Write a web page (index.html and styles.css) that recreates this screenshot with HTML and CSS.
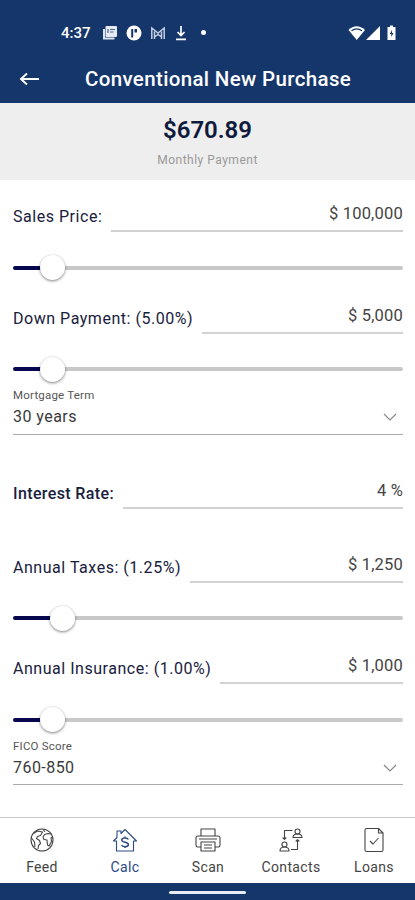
FILE: index.html
```
<!DOCTYPE html>
<html lang="en">
  <head>
    <meta charset="UTF-8">
    <meta name="viewport" content="width=device-width, initial-scale=1.0">
    <title>Conventional New Purchase</title>
    <link rel="stylesheet" href="styles.css">
  </head>
  <body>
    <header>
      <div class="status-bar">
        <span class="clock">4:37</span>
        <svg class="notes" width="16" height="16" viewBox="0 0 16 16">
          <path d="M2 4v9.500h10.500" fill="none" stroke="#dfe5f0" stroke-width="2"/>
          <rect x="3.500" y="1" width="11.500" height="11" rx="1" fill="#e6eaf3"/>
          <path d="M6 4v4M8 4.500h5M8 7h3.500" stroke="#4c6590" stroke-width="1.200"/>
        </svg>
        <svg width="16" height="16" viewBox="0 0 16 16">
          <circle cx="8" cy="8" r="7.500" fill="#fff"/>
          <path d="M6.200 12.500V4" fill="none" stroke="#15366b" stroke-width="2"/>
          <path d="M8.500 4h2.500v3.500H8.500z" fill="#15366b"/>
        </svg>
        <svg width="16" height="16" viewBox="0 0 16 16">
          <path d="M1.800 14V3l6.200 5 6.200-5v11M4.500 14V6.500M11.500 14V6.500M4.500 12L8 9.500l3.500 2.500" fill="none" stroke="#c3cde0" stroke-width="1.500"/>
        </svg>
        <svg width="14" height="16" viewBox="0 0 14 16">
          <path d="M7 1v9M3.500 7L7 10.500 10.500 7M2 14.300h10" fill="none" stroke="#fff" stroke-width="1.700"/>
        </svg>
        <span class="dot"></span>
        <svg class="signals" width="50" height="16" viewBox="0 0 50 16">
          <path d="M.5 5Q8.500-2.500 17 5L8.750 15z" fill="#fff"/>
          <path d="M3.500 5.800q5.200-3.800 10.500 0" fill="none" stroke="#15366b" stroke-width="1.300"/>
          <path d="M18 15L32 1v14z" fill="#fff"/>
          <path d="M39.500 2h2.500V.5h3V2h2.500v13h-8z" fill="#fff"/>
          <path d="M44 5l-2.200 4h1.500v3l2.200-4H44z" fill="#15366b"/>
        </svg>
      </div>
      <div class="app-bar">
        <svg class="back" width="22" height="16" viewBox="0 0 22 16">
          <path d="M20 8H2M8 2.500L2 8l6 5.500" fill="none" stroke="#fff" stroke-width="2"/>
        </svg>
        <h1>Conventional New Purchase</h1>
      </div>
    </header>

    <section class="summary">
      <div class="amount">$670.89</div>
      <div class="caption">Monthly Payment</div>
    </section>

    <main>
      <div class="field">
        <span class="label">Sales Price:</span>
        <span class="value">$ 100,000</span>
      </div>
      <div class="slider">
        <div class="filled" style="width: 10%"></div>
        <div class="knob"></div>
        <div class="rest"></div>
      </div>

      <div class="field">
        <span class="label">Down Payment: (5.00%)</span>
        <span class="value">$ 5,000</span>
      </div>
      <div class="slider">
        <div class="filled" style="width: 10%"></div>
        <div class="knob"></div>
        <div class="rest"></div>
      </div>

      <div class="select">
        <div class="select-label">Mortgage Term</div>
        <div class="select-value">
          <span>30 years</span>
          <svg width="14" height="8" viewBox="0 0 14 8"><path d="M1 1l6 6 6-6"/></svg>
        </div>
      </div>

      <div class="field spaced">
        <span class="label bold">Interest Rate:</span>
        <span class="value">4 %</span>
      </div>

      <div class="field spaced">
        <span class="label">Annual Taxes: (1.25%)</span>
        <span class="value">$ 1,250</span>
      </div>
      <div class="slider">
        <div class="filled" style="width: 12.5%"></div>
        <div class="knob"></div>
        <div class="rest"></div>
      </div>

      <div class="field">
        <span class="label">Annual Insurance: (1.00%)</span>
        <span class="value">$ 1,000</span>
      </div>
      <div class="slider">
        <div class="filled" style="width: 10%"></div>
        <div class="knob"></div>
        <div class="rest"></div>
      </div>

      <div class="select">
        <div class="select-label">FICO Score</div>
        <div class="select-value">
          <span>760-850</span>
          <svg width="14" height="8" viewBox="0 0 14 8"><path d="M1 1l6 6 6-6"/></svg>
        </div>
      </div>
    </main>

    <nav class="tabs">
      <a class="tab">
        <svg width="26" height="26" viewBox="0 0 26 26">
          <circle cx="13" cy="13" r="11"/>
          <path d="M4.500 6.500l4-2.500 5 1-2 3.500-3 1-1 2 3 2 1 3-2 2-.5 3.500M2.500 11l3 4 .5 5M14 2.500l2 2.500M22 7l-3-.5-3.500 1L14 10l1 2.500 3 .5.500 5 1.500 1 2.500-4.500-.5-3.500 1.500-1"/>
        </svg>
        <span>Feed</span>
      </a>
      <a class="tab active">
        <svg width="26" height="26" viewBox="0 0 26 26">
          <path d="M4.500 14v10h17V14h3L13 2.500 9 6.500V4H5v6.500L1.500 14z"/>
          <path d="M16.300 12.500c-.5-1.200-1.700-1.600-3.300-1.600-2 0-3.200.7-3.200 2.100 0 3.200 6.600 1.400 6.600 4.500 0 1.500-1.400 2.200-3.400 2.200-1.800 0-3-.5-3.500-1.700M13 9.500v1.500M13 19.500V21" stroke-width="1.500"/>
        </svg>
        <span>Calc</span>
      </a>
      <a class="tab">
        <svg width="26" height="26" viewBox="0 0 26 26">
          <path d="M6 9V2h14v7M6 20H2.500Q1 20 1 18v-7q0-2 2-2h20q2 0 2 2v7q0 2-1.500 2H20M6 15h14v9H6zM4 12h18M9 18h8M9 21h8"/>
        </svg>
        <span>Scan</span>
      </a>
      <a class="tab">
        <svg width="26" height="26" viewBox="0 0 26 26">
          <circle cx="19.500" cy="4.500" r="2.500"/>
          <path d="M15 10.500q0-3.500 4.500-3.500t4.500 3.500z"/>
          <circle cx="6.500" cy="17.500" r="2.500"/>
          <path d="M2 24q0-4 4.500-4t4.500 4zM14.500 3.500H6.500V12M4.700 10.500l1.800 1.800 1.800-1.800M13 22.500h6.500V13M17.700 14.500l1.800-1.800 1.800 1.800"/>
        </svg>
        <span>Contacts</span>
      </a>
      <a class="tab">
        <svg width="26" height="26" viewBox="0 0 26 26">
          <path d="M4 3q0-1.500 1.500-1.500h12l4.500 4.500v17q0 1.500-1.500 1.500h-15Q4 24.500 4 23zM17.500 1.500V6H22M9 14l3 3 5.500-6"/>
        </svg>
        <span>Loans</span>
      </a>
    </nav>

    <footer><div class="home-bar"></div></footer>
  </body>
</html>
```
FILE: styles.css
```
* {
  box-sizing: border-box;
}
body {
  margin: 0;
  height: 900px;
  display: flex;
  flex-direction: column;
  overflow: hidden;
  font-family: Roboto, Arial, sans-serif;
  background: #fff;
}
header {
  height: 103px;
  background: #15366b;
  color: #fff;
}
.status-bar {
  height: 56px;
  padding: 9px 17px 0 61px;
  display: flex;
  align-items: center;
}
.clock {
  width: 41px;
  font-size: 15px;
  font-weight: 500;
}
.status-bar svg {
  margin-right: 8px;
}
.dot {
  width: 5px;
  height: 5px;
  margin-left: 5px;
  border-radius: 50%;
  background: #fff;
}
.status-bar .signals {
  margin: 0 0 0 auto;
}
.app-bar {
  height: 45px;
  padding-left: 19px;
  display: flex;
  align-items: center;
}
h1 {
  margin: 1px 0 0 44px;
  font-size: 20.5px;
  font-weight: 500;
  letter-spacing: 0.35px;
  white-space: nowrap;
}

.summary {
  height: 77px;
  padding-top: 11px;
  text-align: center;
  background: #eee;
}
.amount {
  font-size: 24px;
  line-height: 32px;
  font-weight: 600;
  color: #101a3c;
}
.caption {
  margin-top: 6px;
  font-size: 12px;
  line-height: 16px;
  letter-spacing: 0.5px;
  color: #999;
}

main {
  flex: 1;
  padding: 10px 12px 0 13px;
}
.field {
  height: 42px;
  display: flex;
  gap: 9px;
}
.label {
  padding-top: 17px;
  font-size: 16px;
  line-height: 20px;
  letter-spacing: 0.53px;
  color: #18203d;
  white-space: nowrap;
}
.bold {
  font-weight: 500;
  letter-spacing: 0.38px;
}
.value {
  flex: 1;
  padding-top: 14px;
  border-bottom: 2px solid #d2d2d2;
  font-size: 16.5px;
  line-height: 20px;
  letter-spacing: 0.2px;
  text-align: right;
  color: #444;
}
.spaced {
  margin-top: 32px;
}
.slider {
  height: 26px;
  margin: 22.5px 0 11px;
  display: flex;
  align-items: center;
}
.filled {
  height: 4px;
  margin-right: -12px;
  border-radius: 2px 0 0 2px;
  background: #07074f;
}
.knob {
  width: 25px;
  height: 25px;
  flex: none;
  border-radius: 50%;
  background: #fff;
  box-shadow: 0 1px 3px rgba(0, 0, 0, 0.5);
  z-index: 1;
}
.rest {
  flex: 1;
  height: 4px;
  border-radius: 0 2px 2px 0;
  background: #c8c8c8;
}
.select {
  height: 46.5px;
  margin-top: -5px;
  border-bottom: 1px solid #aaa;
}
.select-label {
  font-size: 11.5px;
  line-height: 14px;
  letter-spacing: 0.2px;
  color: #555;
}
.select-value {
  margin-top: 5px;
  padding-right: 6px;
  display: flex;
  align-items: center;
  justify-content: space-between;
  font-size: 16px;
  line-height: 20px;
  letter-spacing: 0.45px;
  color: #3a3a3a;
}
.select-value path {
  fill: none;
  stroke: #888;
  stroke-width: 1.2;
}

.tabs {
  height: 66px;
  border-top: 1px solid #c9c9c9;
  display: flex;
}
.tab {
  flex: 1;
  padding-top: 9px;
  display: flex;
  flex-direction: column;
  align-items: center;
  font-size: 14px;
  line-height: 18px;
  letter-spacing: 0.35px;
  color: #444;
}
.tab svg {
  margin-bottom: 5px;
  fill: none;
  stroke: currentColor;
  stroke-width: 1.1;
  stroke-linejoin: round;
}
.tab span {
  padding-left: 1px;
}
.active {
  color: #2b4a85;
}
footer {
  height: 17px;
  padding-top: 8px;
  background: #15366b;
}
.home-bar {
  width: 77px;
  height: 3px;
  margin: 0 auto;
  border-radius: 2px;
  background: #e8ecf5;
}
```
